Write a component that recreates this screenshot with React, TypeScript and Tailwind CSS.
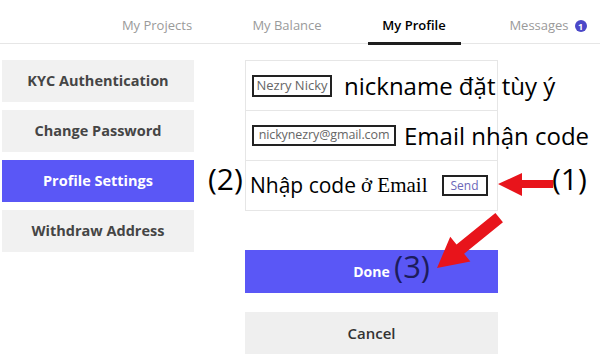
import React from 'react';

const tabs = [
  { label: 'My Projects', w: 'w-[130px]' },
  { label: 'My Balance', w: 'w-[130px]' },
  { label: 'My Profile', w: 'w-[124px]', active: true },
  { label: 'Messages', w: 'w-[144px]', badge: 1 },
];

const menu = [
  { label: 'KYC Authentication' },
  { label: 'Change Password' },
  { label: 'Profile Settings', active: true },
  { label: 'Withdraw Address' },
];

const Arrows: React.FC = () => (
  <svg className="absolute inset-0 pointer-events-none" width="600" height="358" viewBox="0 0 600 358">
    <polygon points="498,184 522,173 522,180 553,180 553,188 522,188 522,196" fill="#e8141b" />
    <g transform="translate(437 268) rotate(-39)">
      <polygon points="0,0 30,-16 30,-6 80,-6 80,6 30,6 30,16" fill="#e8141b" />
    </g>
  </svg>
);

export default function App() {
  return (
    <div className="relative w-[600px] h-[358px] bg-white overflow-hidden font-['Open_Sans',sans-serif]">
      {/* top tabs */}
      <div className="h-[44px] border-b border-[#e6e6e6] flex pl-[92px]">
        {tabs.map((t) => (
          <div key={t.label} className={`${t.w} shrink-0 flex justify-center`}>
            <div
              className={
                t.active
                  ? 'w-[93px] h-[45px] flex items-center justify-center border-b-[3px] border-[#1e1e1e] text-[13px] font-semibold text-black pt-[9px]'
                  : 'h-full flex items-center text-[13px] text-[#9a9a9a] pt-[9px]'
              }
            >
              {t.label}
              {t.badge && (
                <span className="ml-[6px] w-[12px] h-[12px] rounded-full bg-[#4b48c8] text-white text-[9px] font-bold flex items-center justify-center leading-none">
                  {t.badge}
                </span>
              )}
            </div>
          </div>
        ))}
      </div>

      <div className="flex mt-[16px]">
        {/* side menu */}
        <div className="ml-[2px] w-[192px] flex flex-col gap-[8px]">
          {menu.map((m) => (
            <div
              key={m.label}
              className={`h-[42px] flex items-center justify-center text-[14.5px] font-bold ${
                m.active ? 'bg-[#5a57f6] text-white' : 'bg-[#f1f1f1] text-[#454545]'
              }`}
            >
              {m.label}
            </div>
          ))}
        </div>

        {/* form */}
        <div className="ml-[51px] w-[253px]">
          <div className="border border-[#e6e6e6]">
            <div className="h-[50px] flex items-center pl-[6px] border-b border-[#e6e6e6] whitespace-nowrap">
              <div className="shrink-0 w-[80px] h-[22px] border-2 border-[#222] flex items-center justify-center text-[13px] text-[#666]">
                Nezry Nicky
              </div>
              <span className="ml-[12px] text-[24px] text-black leading-none">nickname đặt tùy ý</span>
            </div>
            <div className="h-[50px] flex items-center pl-[6px] border-b border-[#e6e6e6] whitespace-nowrap">
              <div className="shrink-0 w-[144px] h-[21px] border-2 border-[#222] flex items-center justify-center text-[12.5px] text-[#666] tracking-[-0.1px]">
                nickynezry@gmail.com
              </div>
              <span className="ml-[8px] text-[24px] text-black leading-none">Email nhận code</span>
            </div>
            <div className="h-[49px] flex items-center pl-[4px] whitespace-nowrap">
              <span className="text-[21px] text-black leading-none">Nhập code</span>
              <span className="ml-[5px] text-[21px] text-black leading-none font-['Liberation_Serif',serif]">ở Email</span>
              <div className="shrink-0 ml-[14px] w-[46px] h-[21px] border-2 border-[#222] flex items-center justify-center text-[12px] text-[#6b67b8]">
                Send
              </div>
            </div>
          </div>

          <div className="mt-[39px] h-[43px] bg-[#5a57f6] flex items-center justify-center text-white text-[14px] font-bold">
            Done
          </div>
          <div className="mt-[19px] h-[42px] bg-[#efefef] flex items-center justify-center text-[#333] text-[15px] font-semibold">
            Cancel
          </div>
        </div>
      </div>

      {/* annotations */}
      <span className="absolute left-[208px] top-[164px] text-[30px] text-black leading-none">(2)</span>
      <span className="absolute left-[552px] top-[164px] text-[30px] text-black leading-none">(1)</span>
      <span className="absolute left-[394px] top-[251px] text-[31px] text-[#1c1c5c] leading-none">(3)</span>
      <Arrows />
    </div>
  );
}
